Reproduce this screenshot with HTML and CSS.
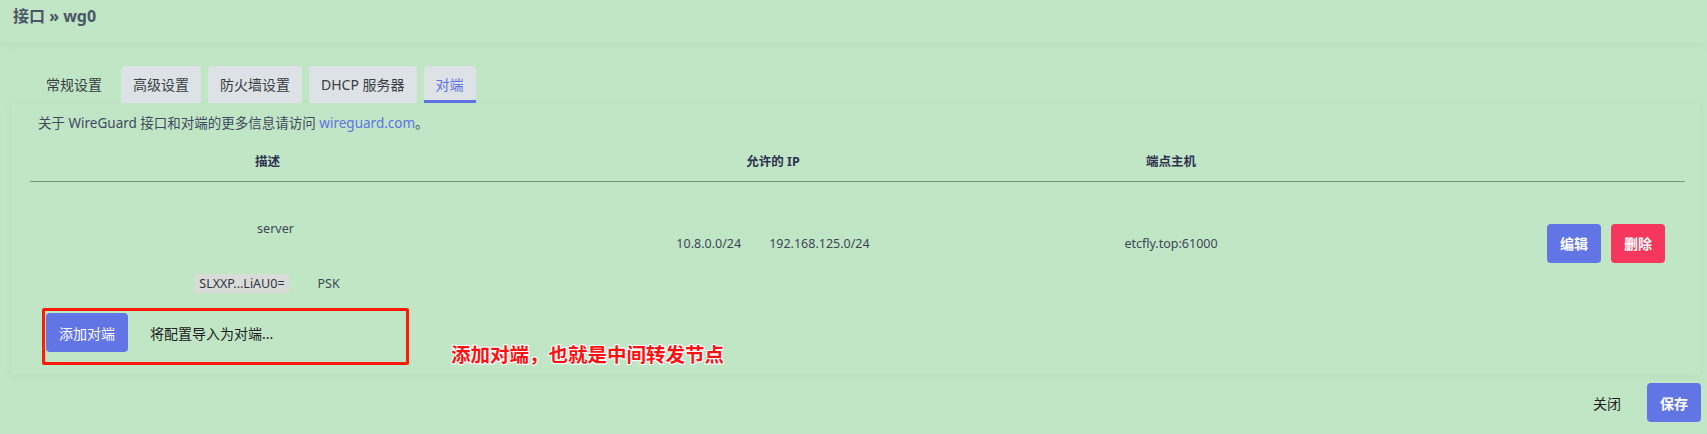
FILE: index.html
```html
<!DOCTYPE html>
<html lang="zh-CN">
<head>
<meta charset="utf-8">
<title>接口 » wg0</title>
<link rel="stylesheet" href="styles.css">
</head>
<body>
<header class="topbar"><h2 class="title">接口 » wg0</h2></header>
<main class="page">
  <ul class="tabs">
    <li class="tab plain">常规设置</li>
    <li class="tab">高级设置</li>
    <li class="tab">防火墙设置</li>
    <li class="tab">DHCP 服务器</li>
    <li class="tab active">对端</li>
  </ul>
  <section class="card">
    <p class="desc">关于 WireGuard 接口和对端的更多信息请访问 <a class="link" href="#">wireguard.com</a>。</p>
    <div class="table">
      <div class="thead grid">
        <div class="th">描述</div>
        <div class="th">允许的 IP</div>
        <div class="th">端点主机</div>
        <div class="th"></div>
      </div>
      <div class="trow grid">
        <div class="c-desc">
          <div class="name">server</div>
          <div class="keys"><span class="badge">SLXXP...LiAU0=</span><span class="psk">PSK</span></div>
        </div>
        <div class="c-ips"><span>10.8.0.0/24</span><span>192.168.125.0/24</span></div>
        <div class="c-host">etcfly.top:61000</div>
        <div class="c-act"><button class="btn edit">编辑</button><button class="btn del">删除</button></div>
      </div>
    </div>
    <div class="add"><button class="btn add-btn">添加对端</button><span class="import">将配置导入为对端...</span></div>
  </section>
  <footer class="actions"><span class="close">关闭</span><button class="btn save">保存</button></footer>
</main>
<div class="anno-box"></div>
<div class="anno-text">添加对端，也就是中间转发节点</div>
</body>
</html>
```
FILE: styles.css
```css
* { box-sizing: border-box; }
html, body { margin: 0; padding: 0; }
body {
  background: #c1e6c6;
  font-family: "Noto Sans", "Noto Sans CJK SC", sans-serif;
  color: #404b5a;
  width: 1707px;
  height: 434px;
  overflow: hidden;
  position: relative;
}
.topbar {
  height: 42px;
  padding-left: 13px;
  box-shadow: 0 3px 12px rgba(0, 0, 0, 0.035);
}
.title {
  margin: 0;
  font-size: 16px;
  line-height: 32px;
  font-weight: 700;
  color: #4a5566;
}
.page {
  padding: 0 6px 0 11px;
}
.tabs {
  list-style: none;
  margin: 24px 0 0 23px;
  padding: 0;
  display: flex;
  gap: 7px;
}
.tab {
  height: 37px;
  line-height: 37px;
  padding: 0 12px;
  font-size: 14px;
  color: #3a3d42;
  background: #dde2e6;
  border-radius: 4px 4px 0 0;
}
.tab.plain { background: transparent; }
.tab.active {
  color: #5e72e4;
  box-shadow: inset 0 -3px 0 #5e72e4;
}
.card {
  margin-right: 1px;
  padding: 10px 15px 23px 19px;
  border-radius: 4px;
  box-shadow: 0 1px 7px rgba(0, 0, 0, 0.05);
}
.desc {
  margin: 0 0 10px 8px;
  font-size: 13.5px;
  line-height: 20px;
  color: #3f4a5e;
}
.link { color: #5e72e4; text-decoration: none; }
.grid {
  display: grid;
  grid-template-columns: 475px 536px 260px 1fr;
}
.thead { border-bottom: 1px solid #7b957f; }
.th {
  height: 38px;
  line-height: 38px;
  text-align: center;
  font-size: 12.5px;
  font-weight: 700;
  color: #2f3150;
}
.trow {
  height: 122px;
  align-items: center;
  font-size: 12.5px;
  color: #3e4656;
}
.c-desc {
  align-self: start;
  padding-top: 38px;
  text-align: center;
}
.name { line-height: 18px; padding-left: 16px; }
.keys {
  margin-top: 36px;
  display: flex;
  justify-content: center;
  align-items: center;
  gap: 29px;
}
.badge {
  background: #d9dcd9;
  border-radius: 3px;
  padding: 1px 4px;
  line-height: 17px;
  color: #2e3540;
}
.c-ips {
  display: flex;
  justify-content: center;
  gap: 28px;
}
.c-host { text-align: center; }
.c-act {
  display: flex;
  justify-content: flex-end;
  gap: 10px;
  padding-right: 20px;
}
.btn {
  height: 39px;
  padding: 0 13px;
  border: none;
  border-radius: 4px;
  font-family: "Noto Sans", "Noto Sans CJK SC", sans-serif;
  font-size: 14px;
  color: #fff;
  background: #6175e4;
}
.edit, .del, .save { font-weight: 700; }
.del { background: #f5375d; }
.add {
  margin-top: 9px;
  padding-left: 16px;
  display: flex;
  align-items: center;
  gap: 22px;
}
.import { font-size: 14px; color: #202020; }
.actions {
  margin-top: 8px;
  display: flex;
  justify-content: flex-end;
  align-items: center;
  gap: 26px;
}
.close { font-size: 14px; color: #202020; }
.anno-box {
  position: absolute;
  left: 42px;
  top: 308px;
  width: 367px;
  height: 57px;
  border: 3px solid #ff1a0a;
  border-radius: 2px;
}
.anno-text {
  position: absolute;
  left: 451px;
  top: 342px;
  font-size: 19.5px;
  line-height: 26px;
  font-weight: 700;
  color: #ff1010;
  text-shadow: 1px 1px 0 #fff, -1px -1px 0 #fff, 1px -1px 0 #fff, -1px 1px 0 #fff, 0 0 2px #fff;
}
```
